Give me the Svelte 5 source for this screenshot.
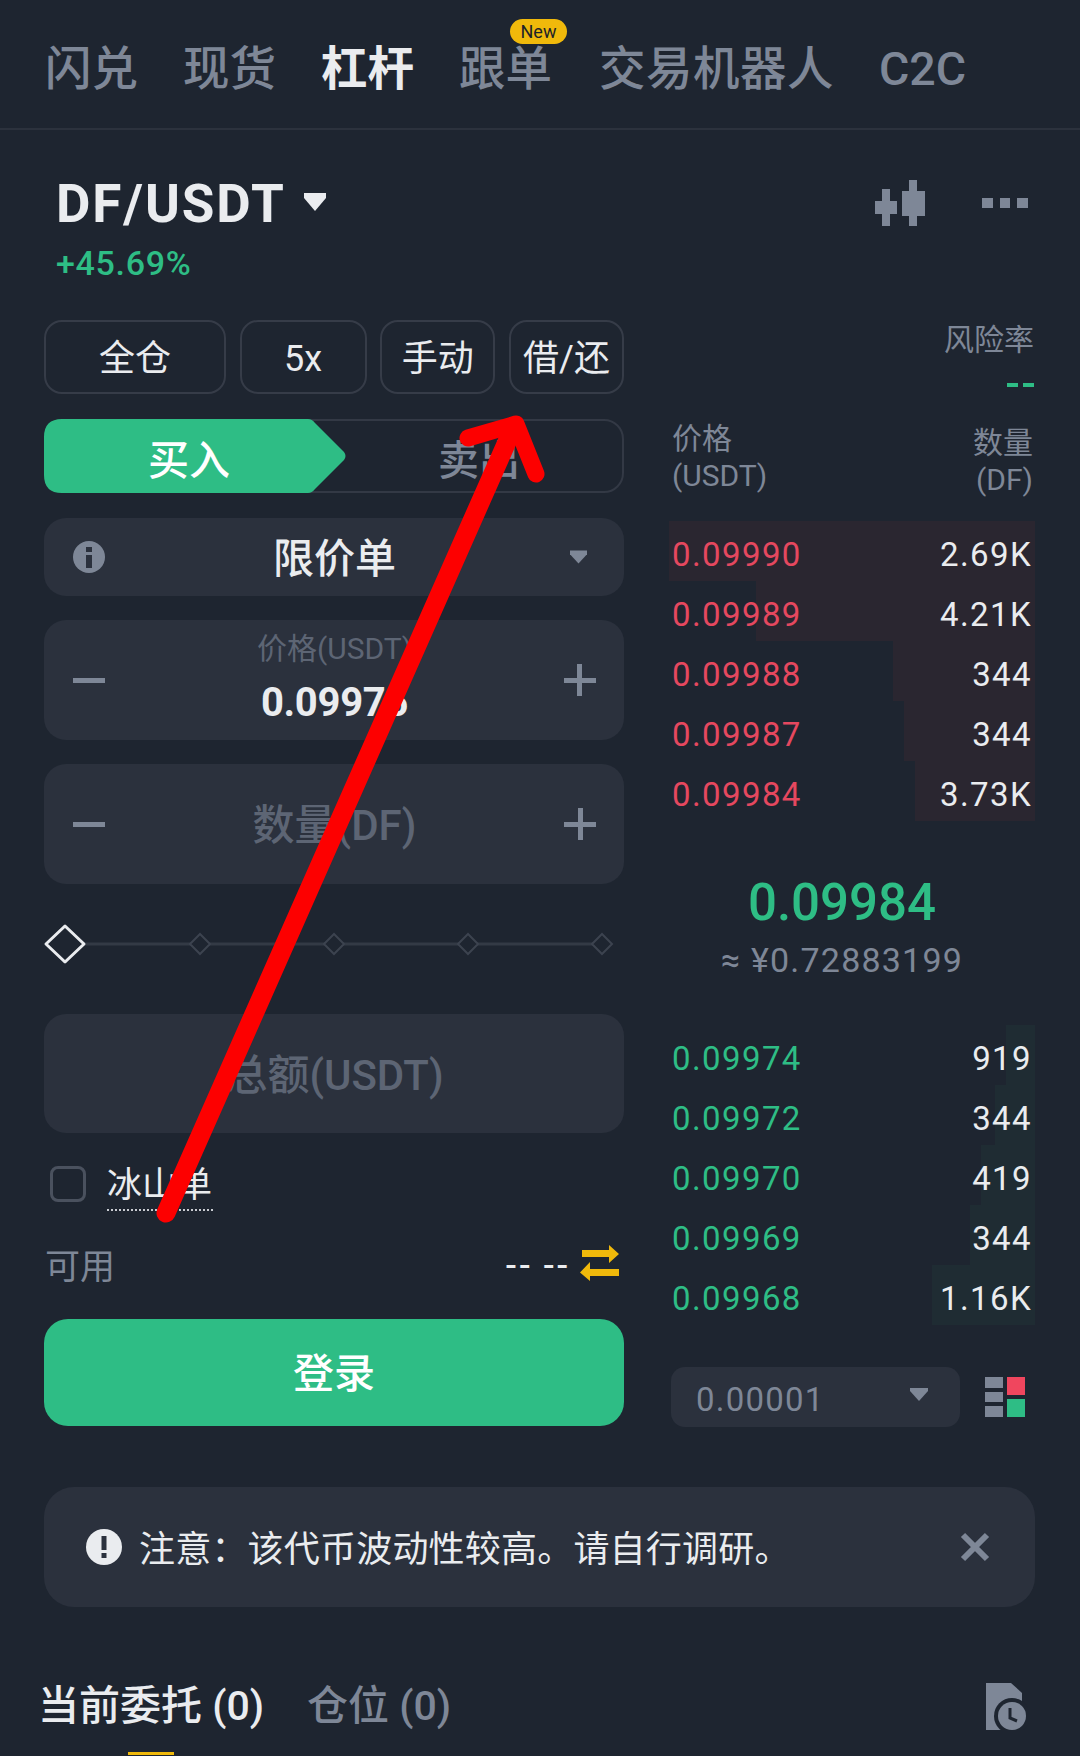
<script>
  let tabs = [
    { name: "闪兑" },
    { name: "现货" },
    { name: "杠杆", active: true },
    { name: "跟单", badge: "New" },
    { name: "交易机器人", wide: true },
    { name: "C2C" }
  ]

  let modes = [
    { name: "全仓", width: 182 },
    { name: "5x", width: 127 },
    { name: "手动", width: 115 },
    { name: "借/还", width: 115 }
  ]

  // left = where the depth bar starts, in px from the book's left edge
  let asks = [
    { price: "0.09990", size: "2.69K", left: 0 },
    { price: "0.09989", size: "4.21K", left: 87 },
    { price: "0.09988", size: "344", left: 224 },
    { price: "0.09987", size: "344", left: 235 },
    { price: "0.09984", size: "3.73K", left: 246 }
  ]

  let bids = [
    { price: "0.09974", size: "919", left: 337 },
    { price: "0.09972", size: "344", left: 326 },
    { price: "0.09970", size: "419", left: 312 },
    { price: "0.09969", size: "344", left: 301 },
    { price: "0.09968", size: "1.16K", left: 263 }
  ]

  let stops = [200, 334, 468, 602]
</script>

<main>
  <nav class="tabs">
    {#each tabs as tab}
      <div class="tab" class:active={tab.active} class:wide={tab.wide}>
        {tab.name}
        {#if tab.badge}<span class="badge">{tab.badge}</span>{/if}
      </div>
    {/each}
  </nav>

  <header class="pair">
    <div>
      <div class="symbol">
        DF/USDT
        <svg width="24" height="18" viewBox="0 0 24 18"><path d="M1 0h22v5L12 18 1 5z" fill="#eaecef" /></svg>
      </div>
      <div class="change">+45.69%</div>
    </div>
    <div class="pair-icons">
      <svg width="50" height="46" viewBox="0 0 50 46" fill="#7e8797">
        <rect x="7" y="9" width="8" height="37" />
        <rect x="0" y="21" width="22" height="13" />
        <rect x="34" y="0" width="8" height="46" />
        <rect x="27" y="11" width="23" height="25" />
      </svg>
      <svg width="46" height="10" viewBox="0 0 46 10" fill="#7e8797">
        <rect x="0" y="0" width="11" height="10" />
        <rect x="18" y="0" width="10" height="10" />
        <rect x="35" y="0" width="11" height="10" />
      </svg>
    </div>
  </header>

  <section class="trade">
    <div class="form">
      <div class="modes">
        {#each modes as mode}
          <div class="mode" style="width: {mode.width}px">{mode.name}</div>
        {/each}
      </div>

      <div class="side">
        <svg class="side-bg" width="303" height="74" viewBox="0 0 303 74">
          <path d="M18 0H264Q268 0 271 4L300 33Q303 37 300 41L271 70Q268 74 264 74H18Q0 74 0 56V18Q0 0 18 0z" fill="#2ebd85" />
        </svg>
        <div class="buy">买入</div>
        <div class="sell">卖出</div>
      </div>

      <div class="field order-type">
        <svg width="32" height="32" viewBox="0 0 32 32">
          <circle cx="16" cy="16" r="16" fill="#7e8797" />
          <rect x="13" y="6" width="6" height="5" fill="#2b313d" />
          <rect x="13" y="14" width="6" height="13" fill="#2b313d" />
        </svg>
        <span class="order-name">限价单</span>
        <svg width="17" height="14" viewBox="0 0 18 14"><path d="M0 0h18v4L9 14 0 4z" fill="#7e8797" /></svg>
      </div>

      <div class="field stepper">
        <span class="minus"></span>
        <div class="price-input">
          <span class="price-label">价格(USDT)</span>
          <span class="price-value">0.09975</span>
        </div>
        <span class="plus"></span>
      </div>

      <div class="field stepper">
        <span class="minus"></span>
        <span class="placeholder">数量(DF)</span>
        <span class="plus"></span>
      </div>

      <svg class="slider" width="624" height="44" viewBox="0 0 624 44">
        <line x1="65" y1="22" x2="602" y2="22" stroke="#333a45" stroke-width="3" />
        {#each stops as x}
          <path d="M{x - 10} 22L{x} 12L{x + 10} 22L{x} 32z" fill="#1e2530" stroke="#3c434f" stroke-width="2" />
        {/each}
        <path d="M46 22L65 4L84 22L65 40z" fill="#1e2530" stroke="#eaecef" stroke-width="3" stroke-linejoin="round" />
      </svg>

      <div class="field stepper total">
        <span class="placeholder">总额(USDT)</span>
      </div>

      <div class="iceberg">
        <span class="check"></span>
        <span class="iceberg-label">冰山单</span>
      </div>

      <div class="avail">
        <span class="avail-label">可用</span>
        <div class="avail-value">
          <span class="dashes">-- --</span>
          <svg width="39" height="36" viewBox="0 0 39 36" fill="#f0b90b">
            <path d="M2 5H29V0L39 9L29 18V12H2z" />
            <path d="M39 24H10V17L0 27.5L10 36V31H39z" />
          </svg>
        </div>
      </div>

      <div class="login">登录</div>
    </div>

    <div class="book">
      <div class="risk">
        <span>风险率</span>
        <span class="risk-val"><i></i><i></i></span>
      </div>
      <div class="book-head">
        <div>价格<br />(USDT)</div>
        <div class="qty-head">数量<br />(DF)</div>
      </div>

      <div class="rows">
        {#each asks as row}
          <div class="row ask">
            <span class="bar" style="left: {row.left}px"></span>
            <span class="px">{row.price}</span>
            <span class="sz">{row.size}</span>
          </div>
        {/each}
      </div>

      <div class="mid">
        <div class="last">0.09984</div>
        <div class="fiat">≈ ¥0.72883199</div>
      </div>

      <div class="rows">
        {#each bids as row}
          <div class="row bid">
            <span class="bar" style="left: {row.left}px"></span>
            <span class="px">{row.price}</span>
            <span class="sz">{row.size}</span>
          </div>
        {/each}
      </div>

      <div class="book-foot">
        <div class="tick">
          <span class="tick-val">0.00001</span>
          <svg width="18" height="13" viewBox="0 0 18 13"><path d="M0 0h18v3L9 13 0 3z" fill="#7e8797" /></svg>
        </div>
        <svg width="40" height="40" viewBox="0 0 40 40">
          <rect x="0" y="0" width="18" height="11" fill="#7e8797" />
          <rect x="0" y="15" width="18" height="10" fill="#7e8797" />
          <rect x="0" y="29" width="18" height="11" fill="#7e8797" />
          <rect x="22" y="0" width="18" height="18" fill="#f0465e" />
          <rect x="22" y="22" width="18" height="18" fill="#2ebd85" />
        </svg>
      </div>
    </div>
  </section>

  <div class="notice">
    <svg width="36" height="36" viewBox="0 0 36 36">
      <circle cx="18" cy="18" r="18" fill="#eaecef" />
      <rect x="15.5" y="7" width="5" height="14" fill="#2b313d" />
      <rect x="15.5" y="24" width="5" height="5" fill="#2b313d" />
    </svg>
    <span class="notice-text">注意：该代币波动性较高。请自行调研。</span>
    <svg class="close" width="30" height="30" viewBox="0 0 30 30">
      <path d="M3 3L27 27M27 3L3 27" stroke="#7e8797" stroke-width="6" fill="none" />
    </svg>
  </div>

  <footer class="orders">
    <div class="order-tab active">当前委托 (0)<span class="underline"></span></div>
    <div class="order-tab">仓位 (0)</div>
    <svg class="history" width="42" height="47" viewBox="0 0 42 47">
      <path d="M0 0H25L36 10V47H0z" fill="#7e8797" />
      <circle cx="26" cy="33" r="18" fill="#1e2530" />
      <circle cx="26" cy="33" r="14" fill="#7e8797" />
      <path d="M24 25V35L31 38" fill="none" stroke="#1e2530" stroke-width="3" />
    </svg>
  </footer>

  <!-- red annotation arrow painted on top of the screenshot -->
  <svg class="arrow" width="1080" height="1756" viewBox="0 0 1080 1756" fill="none" stroke="#fd0000" stroke-linecap="round" stroke-linejoin="round">
    <path d="M166 1213L514 426" stroke-width="19" />
    <path d="M468 438L516 424L536 474" stroke-width="17" />
  </svg>
</main>

<style>
  :global(body) {
    background: #1e2530;
  }

  main {
    position: relative;
    width: 1080px;
    height: 1756px;
    overflow: hidden;
    background: #1e2530;
    color: #eaecef;
    font-family: Roboto, "Noto Sans CJK SC", sans-serif;
  }

  .tabs {
    display: flex;
    gap: 45px;
    height: 130px;
    padding: 0 0 0 45px;
    box-sizing: border-box;
    border-bottom: 2px solid #2c323d;
    align-items: flex-start;
  }

  .tab {
    position: relative;
    margin-top: 37px;
    font-size: 46.5px;
    line-height: 64px;
    font-weight: 500;
    color: #7e8797;
  }

  .tab.active {
    color: #eaecef;
    font-weight: 700;
  }

  .tab.wide {
    margin-left: 2px;
    letter-spacing: 0.5px;
  }

  .badge {
    position: absolute;
    left: 51px;
    top: -18px;
    width: 57px;
    height: 25px;
    border-radius: 13px;
    background: #f0b90b;
    color: #1e2329;
    font-size: 18px;
    line-height: 25px;
    font-weight: 400;
    text-align: center;
  }

  .pair {
    display: flex;
    justify-content: space-between;
    padding: 43px 52px 0 56px;
    height: 190px;
    box-sizing: border-box;
  }

  .symbol {
    display: flex;
    align-items: center;
    gap: 17px;
    font-size: 53px;
    line-height: 62px;
    font-weight: 700;
    letter-spacing: 1.9px;
  }

  .symbol svg {
    margin-top: -4px;
  }

  .change {
    margin-top: 8px;
    font-size: 34px;
    line-height: 40px;
    font-weight: 500;
    letter-spacing: 0.7px;
    color: #2ebd85;
  }

  .pair-icons {
    display: flex;
    align-items: center;
    gap: 57px;
    height: 50px;
    margin-top: 5px;
  }

  .trade {
    display: flex;
    gap: 45px;
    padding-left: 44px;
  }

  .form {
    width: 580px;
    display: flex;
    flex-direction: column;
  }

  .modes {
    display: flex;
    justify-content: space-between;
  }

  .mode {
    height: 74px;
    box-sizing: border-box;
    border: 2px solid #363c48;
    border-radius: 18px;
    font-size: 36px;
    line-height: 75px;
    text-align: center;
  }

  .side {
    position: relative;
    display: flex;
    height: 74px;
    margin-top: 25px;
    box-sizing: border-box;
    border: 2px solid #333945;
    border-radius: 20px;
    font-size: 41px;
    line-height: 84px;
    text-align: center;
  }

  .side-bg {
    position: absolute;
    left: -2px;
    top: -2px;
  }

  .buy {
    position: relative;
    width: 286px;
    margin-top: -2px;
    color: #fff;
    font-weight: 500;
  }

  .sell {
    flex: 1;
    margin-top: -2px;
    padding-left: 4px;
    color: #7e8797;
    font-weight: 500;
  }

  .field {
    display: flex;
    align-items: center;
    justify-content: space-between;
    background: #2b313d;
    border-radius: 22px;
    padding: 0 28px 0 29px;
  }

  .order-type {
    height: 78px;
    margin-top: 25px;
    padding-right: 37px;
  }

  .order-name {
    font-size: 41px;
    font-weight: 500;
    margin: -4px 6px 0 0;
  }

  .stepper {
    height: 120px;
    margin-top: 24px;
  }

  .minus {
    width: 32px;
    height: 5px;
    background: #7e8797;
  }

  .plus {
    position: relative;
    width: 32px;
    height: 5px;
    background: #7e8797;
  }

  .plus::after {
    content: "";
    position: absolute;
    left: 13.5px;
    top: -13.5px;
    width: 5px;
    height: 32px;
    background: #7e8797;
  }

  .price-input {
    display: flex;
    flex-direction: column;
    align-items: center;
    margin-top: -5px;
  }

  .price-label {
    font-size: 30px;
    line-height: 40px;
    color: #5d6574;
  }

  .price-value {
    margin-top: 10px;
    font-size: 40px;
    line-height: 48px;
    font-weight: 700;
    letter-spacing: -0.3px;
  }

  .placeholder {
    margin-top: -5px;
    font-size: 42px;
    font-weight: 500;
    color: #5d6574;
  }

  .slider {
    display: block;
    flex: none;
    margin: 38px 0 0 -44px;
  }

  .total {
    justify-content: center;
    margin-top: 48px;
    height: 119px;
  }

  .iceberg {
    display: flex;
    align-items: center;
    gap: 21px;
    margin-top: 26px;
    padding-left: 6px;
    height: 50px;
  }

  .check {
    width: 36px;
    height: 36px;
    box-sizing: border-box;
    border: 3px solid #4a515e;
    border-radius: 8px;
  }

  .iceberg-label {
    font-size: 35px;
    line-height: 46px;
    border-bottom: 2px dotted #c9ccd2;
    margin-top: 6px;
    padding-right: 1px;
  }

  .avail {
    display: flex;
    justify-content: space-between;
    align-items: center;
    margin-top: 29px;
    height: 50px;
  }

  .avail-label {
    margin-left: 1px;
    font-size: 35px;
    color: #7e8797;
  }

  .avail-value {
    display: flex;
    align-items: center;
    gap: 10px;
    font-size: 34px;
    margin-right: 5px;
  }

  .dashes {
    letter-spacing: 2px;
    font-weight: 500;
    margin-top: 4px;
  }

  .login {
    height: 107px;
    margin-top: 31px;
    border-radius: 24px;
    background: #2ebd85;
    color: #fff;
    font-size: 41px;
    font-weight: 500;
    line-height: 110px;
    text-align: center;
  }

  .book {
    width: 366px;
    display: flex;
    flex-direction: column;
  }

  .risk {
    display: flex;
    flex-direction: column;
    align-items: flex-end;
    height: 64px;
    font-size: 30px;
    line-height: 40px;
    color: #7e8797;
    margin-right: 1px;
  }

  .risk-val {
    display: flex;
    gap: 5px;
    margin-top: 23px;
  }

  .risk-val i {
    display: block;
    width: 11px;
    height: 4px;
    background: #2ebd85;
  }

  .book-head {
    display: flex;
    justify-content: space-between;
    margin-top: 36px;
    padding: 0 2px 0 3px;
    height: 101px;
    font-size: 30px;
    line-height: 37px;
    color: #7e8797;
  }

  .qty-head {
    text-align: right;
    margin-top: 4px;
  }

  .row {
    position: relative;
    display: flex;
    justify-content: space-between;
    height: 60px;
    padding: 0 3px;
    font-size: 33px;
    line-height: 68px;
    letter-spacing: 1.4px;
  }

  .bar {
    position: absolute;
    top: 0;
    bottom: 0;
    right: 0;
  }

  .ask .bar {
    background: #2a2630;
  }

  .bid .bar {
    background: #1f2c33;
  }

  .px,
  .sz {
    position: relative;
  }

  .ask .px {
    color: #e5485f;
  }

  .bid .px {
    color: #2ebd85;
  }

  .mid {
    display: flex;
    flex-direction: column;
    align-items: center;
    height: 204px;
    padding-right: 20px;
    box-sizing: border-box;
  }

  .last {
    margin-top: 51px;
    font-size: 51px;
    line-height: 62px;
    font-weight: 500;
    color: #2ebd85;
  }

  .fiat {
    margin-top: 4px;
    font-size: 34px;
    line-height: 44px;
    letter-spacing: 1.2px;
    color: #7e8797;
  }

  .book-foot {
    display: flex;
    align-items: center;
    justify-content: space-between;
    margin-top: 42px;
    padding: 0 10px 0 2px;
  }

  .tick {
    display: flex;
    align-items: center;
    justify-content: space-between;
    width: 289px;
    height: 60px;
    box-sizing: border-box;
    padding: 0 32px 0 25px;
    border-radius: 14px;
    background: #2b313d;
    font-size: 33px;
    letter-spacing: 1.2px;
    color: #7e8797;
  }

  .tick-val {
    margin-top: 4px;
  }

  .tick svg {
    margin-top: -6px;
  }

  .notice {
    display: flex;
    align-items: center;
    height: 120px;
    margin: 60px 45px 0 44px;
    padding: 0 45px 0 42px;
    border-radius: 30px;
    background: #2b313d;
  }

  .notice-text {
    flex: 1;
    margin: -3px 0 0 17px;
    font-size: 36px;
    letter-spacing: 0.2px;
  }

  .orders {
    position: relative;
    display: flex;
    align-items: center;
    gap: 43px;
    margin-top: 64px;
    padding: 0 52px 0 38px;
    height: 70px;
  }

  .order-tab {
    position: relative;
    font-size: 41px;
    line-height: 60px;
    font-weight: 500;
    color: #7e8797;
  }

  .order-tab.active {
    color: #eaecef;
  }

  .underline {
    position: absolute;
    left: 90px;
    bottom: -19px;
    width: 46px;
    height: 3px;
    background: #f0b90b;
  }

  .history {
    margin-left: auto;
  }

  .arrow {
    position: absolute;
    left: 0;
    top: 0;
    pointer-events: none;
  }
</style>
